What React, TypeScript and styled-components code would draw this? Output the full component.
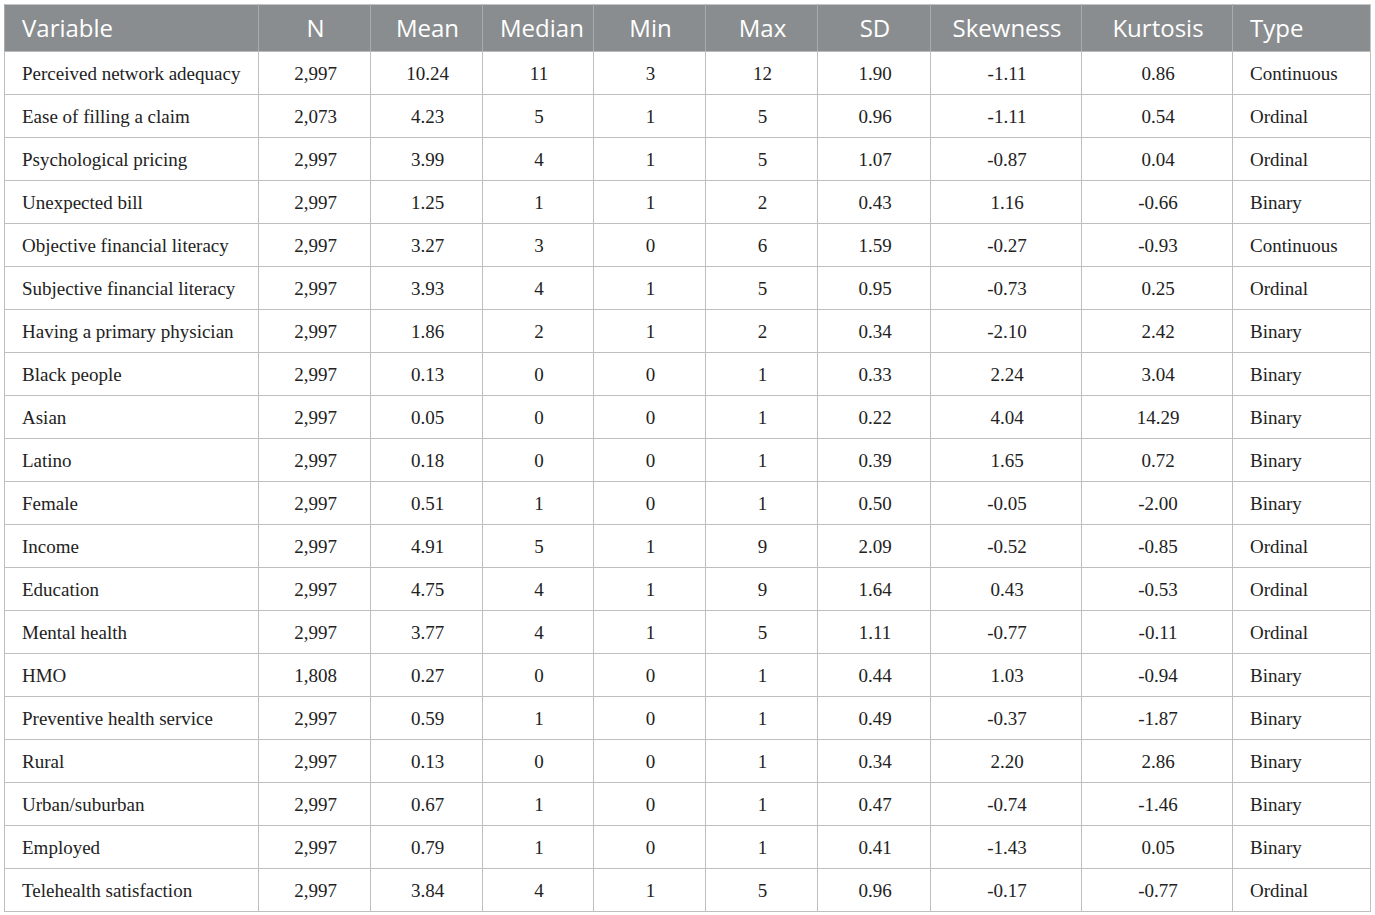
import React from 'react';
import styled, { createGlobalStyle } from 'styled-components';

type Row = [string, string, string, string, string, string, string, string, string, string];

const columns = [
  { title: 'Variable', width: 254, align: 'left' },
  { title: 'N', width: 112, align: 'center' },
  { title: 'Mean', width: 112, align: 'center' },
  { title: 'Median', width: 111, align: 'center' },
  { title: 'Min', width: 112, align: 'center' },
  { title: 'Max', width: 112, align: 'center' },
  { title: 'SD', width: 113, align: 'center' },
  { title: 'Skewness', width: 151, align: 'center' },
  { title: 'Kurtosis', width: 151, align: 'center' },
  { title: 'Type', width: 138, align: 'left' },
] as const;

const rows: Row[] = [
  ['Perceived network adequacy', '2,997', '10.24', '11', '3', '12', '1.90', '-1.11', '0.86', 'Continuous'],
  ['Ease of filling a claim', '2,073', '4.23', '5', '1', '5', '0.96', '-1.11', '0.54', 'Ordinal'],
  ['Psychological pricing', '2,997', '3.99', '4', '1', '5', '1.07', '-0.87', '0.04', 'Ordinal'],
  ['Unexpected bill', '2,997', '1.25', '1', '1', '2', '0.43', '1.16', '-0.66', 'Binary'],
  ['Objective financial literacy', '2,997', '3.27', '3', '0', '6', '1.59', '-0.27', '-0.93', 'Continuous'],
  ['Subjective financial literacy', '2,997', '3.93', '4', '1', '5', '0.95', '-0.73', '0.25', 'Ordinal'],
  ['Having a primary physician', '2,997', '1.86', '2', '1', '2', '0.34', '-2.10', '2.42', 'Binary'],
  ['Black people', '2,997', '0.13', '0', '0', '1', '0.33', '2.24', '3.04', 'Binary'],
  ['Asian', '2,997', '0.05', '0', '0', '1', '0.22', '4.04', '14.29', 'Binary'],
  ['Latino', '2,997', '0.18', '0', '0', '1', '0.39', '1.65', '0.72', 'Binary'],
  ['Female', '2,997', '0.51', '1', '0', '1', '0.50', '-0.05', '-2.00', 'Binary'],
  ['Income', '2,997', '4.91', '5', '1', '9', '2.09', '-0.52', '-0.85', 'Ordinal'],
  ['Education', '2,997', '4.75', '4', '1', '9', '1.64', '0.43', '-0.53', 'Ordinal'],
  ['Mental health', '2,997', '3.77', '4', '1', '5', '1.11', '-0.77', '-0.11', 'Ordinal'],
  ['HMO', '1,808', '0.27', '0', '0', '1', '0.44', '1.03', '-0.94', 'Binary'],
  ['Preventive health service', '2,997', '0.59', '1', '0', '1', '0.49', '-0.37', '-1.87', 'Binary'],
  ['Rural', '2,997', '0.13', '0', '0', '1', '0.34', '2.20', '2.86', 'Binary'],
  ['Urban/suburban', '2,997', '0.67', '1', '0', '1', '0.47', '-0.74', '-1.46', 'Binary'],
  ['Employed', '2,997', '0.79', '1', '0', '1', '0.41', '-1.43', '0.05', 'Binary'],
  ['Telehealth satisfaction', '2,997', '3.84', '4', '1', '5', '0.96', '-0.17', '-0.77', 'Ordinal'],
];

function App() {
  return (
    <>
      <GlobalStyle />
      <StyledPage>
        <StyledTable>
          <colgroup>
            {columns.map((col) => (
              <col key={col.title} style={{ width: col.width }} />
            ))}
          </colgroup>
          <thead>
            <tr>
              {columns.map((col) => (
                <StyledHeadCell key={col.title} $align={col.align}>
                  {col.title}
                </StyledHeadCell>
              ))}
            </tr>
          </thead>
          <tbody>
            {rows.map((row) => (
              <tr key={row[0]}>
                {row.map((value, i) => (
                  <StyledCell key={i} $align={columns[i].align}>
                    {value}
                  </StyledCell>
                ))}
              </tr>
            ))}
          </tbody>
        </StyledTable>
      </StyledPage>
    </>
  );
}

const GlobalStyle = createGlobalStyle`
  html, body {
    margin: 0;
    padding: 0;
    background: #fff;
  }
`;

const StyledPage = styled.div`
  padding: 4px 5px 0 4px;
`;

const StyledTable = styled.table`
  border-collapse: collapse;
  table-layout: fixed;
  width: 1366px;
  border: 1px solid #c4c6c6;
`;

const StyledHeadCell = styled.th<{ $align: string }>`
  height: 46px;
  padding: 0 15px 0 17px;
  line-height: 28px;
  background-color: #898d8f;
  color: #fff;
  font-family: 'Open Sans', 'Noto Sans', sans-serif;
  font-size: 24px;
  font-weight: 400;
  text-align: ${(p) => p.$align};
  border-left: 1px solid #a9acad;
  border-bottom: 1px solid #b9bbbb;
`;

const StyledCell = styled.td<{ $align: string }>`
  height: 40px;
  padding: 2px 15px 0 17px;
  line-height: 20px;
  color: #222;
  font-family: 'Liberation Serif', 'Times New Roman', serif;
  font-size: 19px;
  text-align: ${(p) => p.$align};
  border: 1px solid #bdbfbf;
`;

export default App;
